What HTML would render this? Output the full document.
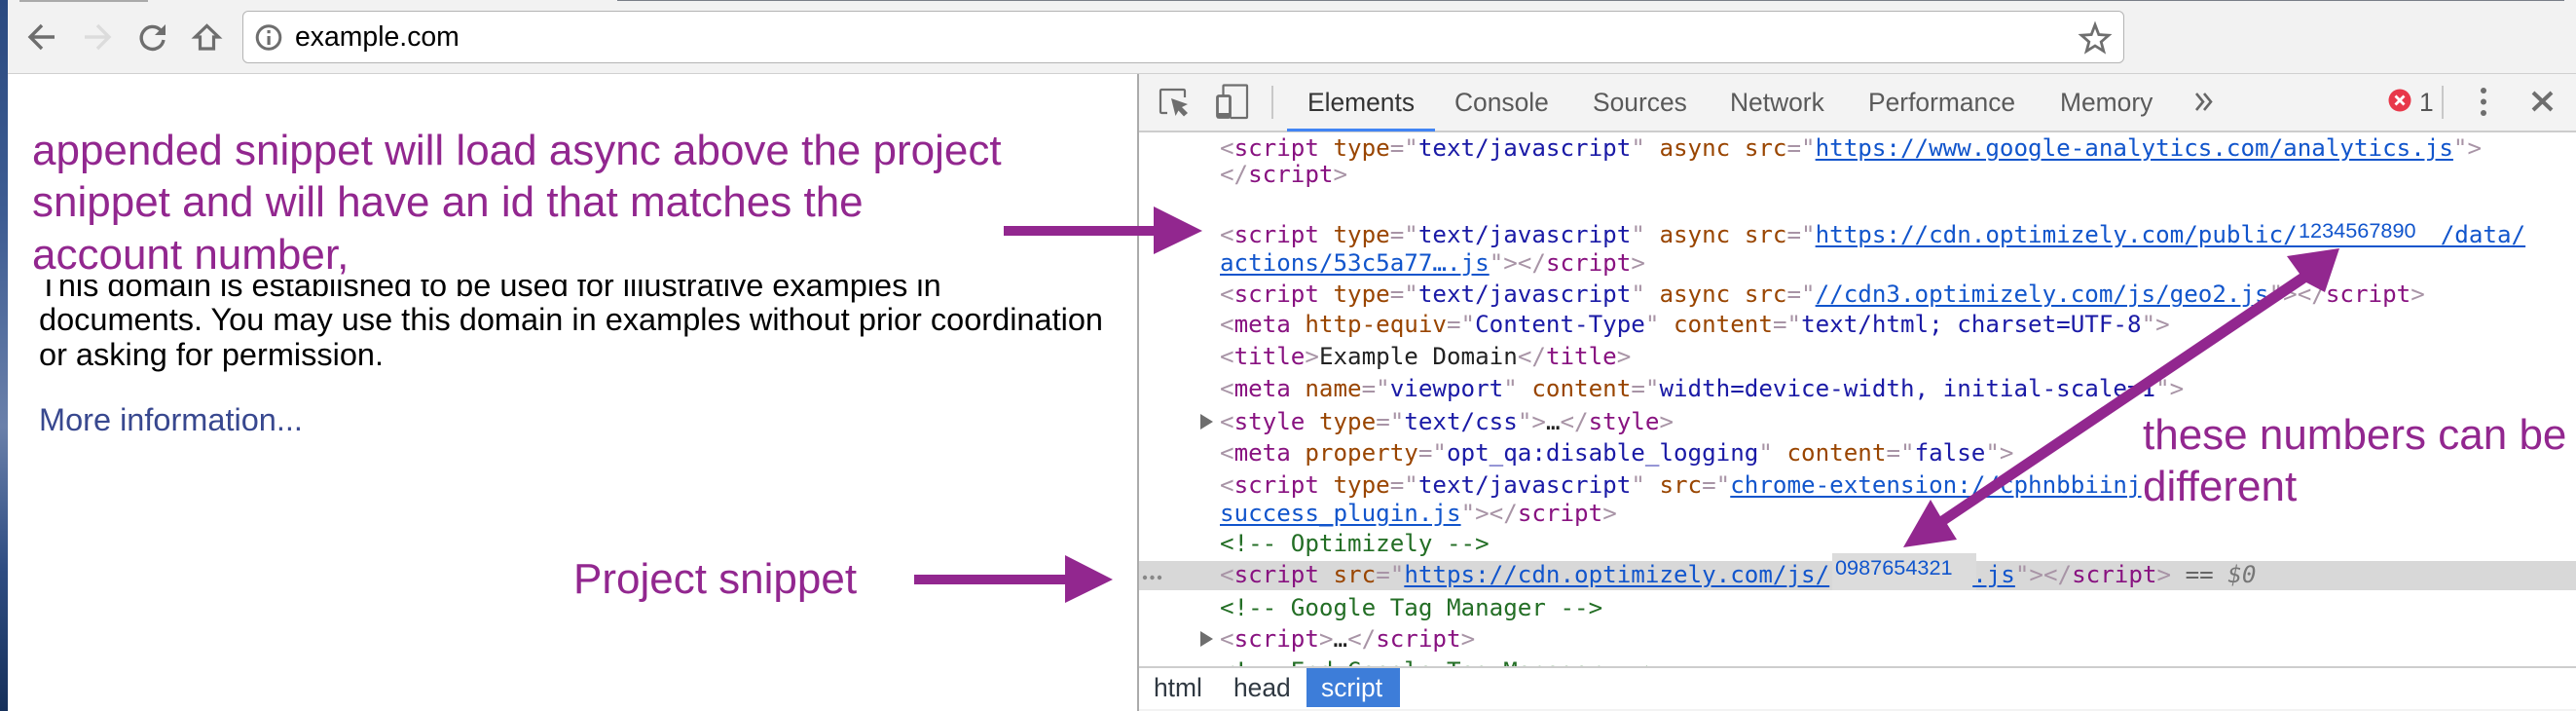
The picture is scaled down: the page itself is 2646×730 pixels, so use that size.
<!DOCTYPE html>
<html><head><meta charset="utf-8"><title>example.com</title>
<style>
html,body{margin:0;padding:0;background:#fff}
#p{position:relative;width:2646px;height:730px;overflow:hidden;background:#fff;font-family:"Liberation Sans",Arial,sans-serif}
.a{position:absolute;white-space:pre}
.tab{position:absolute;top:88px;line-height:34px;font-size:26.4px;color:#5a5a5a;white-space:pre}
.l{position:absolute;left:1253px;height:32px;line-height:32px;font-family:"DejaVu Sans Mono",monospace;font-size:24.2px;color:#222;white-space:pre;letter-spacing:0}
.b{color:#a894a6}.t{color:#881280}.n{color:#994500}.v{color:#1a1aa6}.u{color:#1155cc;text-decoration:underline;text-underline-offset:3px}.c{color:#236e25}
.pu{position:absolute;white-space:pre;color:#92278f;font-size:44px;line-height:52px}
.bk{position:absolute;left:40px;white-space:pre;font-size:32.5px;line-height:36px;color:#000}
.num{font-family:"Liberation Sans",sans-serif;font-size:21.7px;color:#1155cc;position:absolute;white-space:pre;line-height:26px}
</style></head><body><div id="p">
<div class="a" style="left:0;top:0;width:8px;height:730px;background:linear-gradient(#2b4a80 0,#3d5c92 30%,#6a80aa 60%,#2f4d82 80%,#16305a 100%)"></div>
<div class="a" style="left:8px;top:0;width:2638px;height:75px;background:#f2f2f2;border-bottom:1px solid #d0d0d0"></div>
<div class="a" style="left:634px;top:0;width:2000px;height:1px;background:#7a7f88"></div>
<div class="a" style="left:20px;top:0;width:132px;height:2px;background:#aaa"></div>
<div class="a" style="left:249px;top:11px;width:1931px;height:52px;background:#fff;border:1px solid #b4b4b4;border-radius:6px"></div>
<div class="a" style="left:303px;top:20px;font-size:28.4px;line-height:36px;color:#000">example.com</div>

<svg class="a" style="left:0;top:0" width="300" height="70" fill="none">
<path d="M56 38H33M43 26L31 38L43 50" stroke="#6e6e6e" stroke-width="3.4"/>
<path d="M87 38H110M100 26L112 38L100 50" stroke="#dcdcdc" stroke-width="3.4"/>
<path d="M165 31A11.5 11.5 0 1 0 168 41" stroke="#6e6e6e" stroke-width="3.4"/>
<path d="M170 25V36H159Z" fill="#6e6e6e"/>
<path d="M205.500 50V38H200.500L212.500 26.500L224.500 38H219.500V50Z" stroke="#6e6e6e" stroke-width="3.2" stroke-linejoin="miter"/>
<circle cx="276" cy="38.500" r="11.800" stroke="#6e6e6e" stroke-width="3"/>
<rect x="274.500" y="37" width="3.200" height="9" fill="#6e6e6e"/><rect x="274.500" y="31" width="3.200" height="3.200" fill="#6e6e6e"/>
</svg>
<svg class="a" style="left:2130px;top:18px" width="44" height="40" fill="none"><path d="M22 7.500L25.800 17.500L36 18.200L28.200 25L30.800 34.500L22 29L13.200 34.500L15.800 25L8 18.200L18.200 17.500Z" stroke="#6e6e6e" stroke-width="2.800"/></svg>

<div class="bk" style="top:275px;height:30px;overflow:visible">This domain is established to be used for illustrative examples in</div>
<div class="bk" style="top:310px">documents. You may use this domain in examples without prior coordination</div>
<div class="bk" style="top:346px">or asking for permission.</div>
<div class="bk" style="top:413px;color:#38488f">More information...</div>
<div class="a" style="left:8px;top:230px;width:1160px;height:57px;background:#fff"></div>

<div class="a" style="left:1168px;top:76px;width:2px;height:654px;background:#ababab"></div>
<div class="a" style="left:1170px;top:76px;width:1476px;height:58px;background:#f3f3f3;border-bottom:2px solid #cdcdcd"></div>
<div class="a" style="left:1322px;top:132px;width:152px;height:3px;background:#4285f4"></div>
<svg class="a" style="left:1180px;top:80px" width="130" height="50" fill="none">
<path d="M19 36H13.500Q12 36 12 34.500V13.500Q12 12 13.500 12H35.500Q37 12 37 13.500V20" stroke="#6e6e6e" stroke-width="2.200"/>
<path d="M23 21L40 27L34 30L40 36L36 39.500L30.500 33.500L27.500 39Z" fill="#6e6e6e"/>
<path d="M76.500 18V8.500Q76.500 7.500 77.500 7.500H100Q101 7.500 101 8.500V40Q101 41 100 41H84" stroke="#6e6e6e" stroke-width="2.200"/>
<rect x="70.500" y="18.500" width="13" height="22" rx="1.500" stroke="#6e6e6e" stroke-width="2.800"/>
<rect x="70" y="36" width="14" height="5.500" fill="#6e6e6e"/>
<rect x="126" y="8" width="2" height="34" fill="#c8c8c8"/>
</svg>
<div class="tab" style="left:1343px;color:#333">Elements</div>
<div class="tab" style="left:1494px">Console</div>
<div class="tab" style="left:1636px">Sources</div>
<div class="tab" style="left:1777px">Network</div>
<div class="tab" style="left:1919px">Performance</div>
<div class="tab" style="left:2116px">Memory</div>
<svg class="a" style="left:2250px;top:92px" width="30" height="26" fill="none"><path d="M6 4L13 12.500L6 21M14 4L21 12.500L14 21" stroke="#666" stroke-width="2.600"/></svg>
<svg class="a" style="left:2440px;top:80px" width="206" height="50" fill="none">
<circle cx="25" cy="23" r="11.500" fill="#e8384a"/>
<path d="M20.500 18.500L29.500 27.500M29.500 18.500L20.500 27.500" stroke="#fff" stroke-width="2.800"/>
<rect x="68" y="8" width="2" height="34" fill="#c8c8c8"/>
<circle cx="111" cy="13" r="3" fill="#6e6e6e"/><circle cx="111" cy="24.500" r="3" fill="#6e6e6e"/><circle cx="111" cy="36" r="3" fill="#6e6e6e"/>
<path d="M162 15L181 33M181 15L162 33" stroke="#6e6e6e" stroke-width="4"/>
</svg>
<div class="tab" style="left:2485px;color:#555">1</div>

<div class="a" style="left:1170px;top:576px;width:1476px;height:30px;background:#d8d8d8"></div>
<div class="a" style="left:1173px;top:590px;width:24px;height:6px;color:#777"><svg width="24" height="6" style="display:block"><circle cx="3" cy="3" r="2.200" fill="#888"/><circle cx="10.500" cy="3" r="2.200" fill="#888"/><circle cx="18" cy="3" r="2.200" fill="#888"/></svg></div>

<div class="l" style="top:136px"><span class="b">&lt;</span><span class="t">script</span> <span class="n">type</span><span class="b">="</span><span class="v">text/javascript</span><span class="b">"</span> <span class="n">async</span> <span class="n">src</span><span class="b">="</span><span class="u">https://www.google-analytics.com/analytics.js</span><span class="b">"&gt;</span></div>
<div class="l" style="top:163px"><span class="b">&lt;/</span><span class="t">script</span><span class="b">&gt;</span></div>
<div class="l" style="top:225px"><span class="b">&lt;</span><span class="t">script</span> <span class="n">type</span><span class="b">="</span><span class="v">text/javascript</span><span class="b">"</span> <span class="n">async</span> <span class="n">src</span><span class="b">="</span><span class="u">https://cdn.optimizely.com/public/</span><span style="display:inline-block;width:147px"></span><span class="u">/data/</span></div>
<div class="a" style="left:2358px;top:252px;width:152px;height:2px;background:#1155cc"></div>
<div class="num" style="left:2361px;top:224px">1234567890</div>
<div class="l" style="top:254px"><span class="u">actions/53c5a77….js</span><span class="b">"&gt;&lt;/</span><span class="t">script</span><span class="b">&gt;</span></div>
<div class="l" style="top:286px"><span class="b">&lt;</span><span class="t">script</span> <span class="n">type</span><span class="b">="</span><span class="v">text/javascript</span><span class="b">"</span> <span class="n">async</span> <span class="n">src</span><span class="b">="</span><span class="u">//cdn3.optimizely.com/js/geo2.js</span><span class="b">"&gt;&lt;/</span><span class="t">script</span><span class="b">&gt;</span></div>
<div class="l" style="top:317px"><span class="b">&lt;</span><span class="t">meta</span> <span class="n">http-equiv</span><span class="b">="</span><span class="v">Content-Type</span><span class="b">"</span> <span class="n">content</span><span class="b">="</span><span class="v">text/html; charset=UTF-8</span><span class="b">"&gt;</span></div>
<div class="l" style="top:350px"><span class="b">&lt;</span><span class="t">title</span><span class="b">&gt;</span>Example Domain<span class="b">&lt;/</span><span class="t">title</span><span class="b">&gt;</span></div>
<div class="l" style="top:383px"><span class="b">&lt;</span><span class="t">meta</span> <span class="n">name</span><span class="b">="</span><span class="v">viewport</span><span class="b">"</span> <span class="n">content</span><span class="b">="</span><span class="v">width=device-width, initial-scale=1</span><span class="b">"&gt;</span></div>
<svg class="a" style="left:1233px;top:424px" width="14" height="18"><path d="M0 1L13 9L0 17Z" fill="#6e6e6e"/></svg>
<div class="l" style="top:417px"><span class="b">&lt;</span><span class="t">style</span> <span class="n">type</span><span class="b">="</span><span class="v">text/css</span><span class="b">"&gt;</span>…<span class="b">&lt;/</span><span class="t">style</span><span class="b">&gt;</span></div>
<div class="l" style="top:449px"><span class="b">&lt;</span><span class="t">meta</span> <span class="n">property</span><span class="b">="</span><span class="v">opt_qa:disable_logging</span><span class="b">"</span> <span class="n">content</span><span class="b">="</span><span class="v">false</span><span class="b">"&gt;</span></div>
<div class="l" style="top:482px;width:947px;overflow:hidden"><span class="b">&lt;</span><span class="t">script</span> <span class="n">type</span><span class="b">="</span><span class="v">text/javascript</span><span class="b">"</span> <span class="n">src</span><span class="b">="</span><span class="u">chrome-extension://cphnbbiinj</span></div>
<div class="l" style="top:511px"><span class="u">success_plugin.js</span><span class="b">"&gt;&lt;/</span><span class="t">script</span><span class="b">&gt;</span></div>
<div class="l c" style="top:542px">&lt;!-- Optimizely --&gt;</div>
<div class="a" style="left:1882px;top:568px;width:148px;height:38px;background:#dcdcdc"></div>
<div class="l" style="top:574px"><span class="b">&lt;</span><span class="t">script</span> <span class="n">src</span><span class="b">="</span><span class="u">https://cdn.optimizely.com/js/</span><span style="display:inline-block;width:147px"></span><span class="u">.js</span><span class="b">"&gt;&lt;/</span><span class="t">script</span><span class="b">&gt;</span> <span style="color:#666">==</span> <span style="color:#777;font-style:italic">$0</span></div>
<div class="num" style="left:1885px;top:570px">0987654321</div>
<div class="l c" style="top:608px">&lt;!-- Google Tag Manager --&gt;</div>
<svg class="a" style="left:1233px;top:647px" width="14" height="18"><path d="M0 1L13 9L0 17Z" fill="#6e6e6e"/></svg>
<div class="l" style="top:640px"><span class="b">&lt;</span><span class="t">script</span><span class="b">&gt;</span>…<span class="b">&lt;/</span><span class="t">script</span><span class="b">&gt;</span></div>
<div class="l c" style="top:673px">&lt;!-- End Google Tag Manager --&gt;</div>

<div class="a" style="left:1170px;top:684px;width:1476px;height:42px;background:#fff;border-top:2px solid #cdcdcd;border-bottom:2px solid #cdcdcd"></div>
<div class="a" style="left:1170px;top:728px;width:1476px;height:2px;background:#f3f3f3"></div>
<div class="a" style="left:1342px;top:686px;width:96px;height:40px;background:#3d7dd9"></div>
<div class="a" style="left:1185px;top:688px;font-size:26.4px;line-height:36px;color:#303942">html</div>
<div class="a" style="left:1267px;top:688px;font-size:26.4px;line-height:36px;color:#303942">head</div>
<div class="a" style="left:1357px;top:688px;font-size:26.4px;line-height:36px;color:#fff">script</div>

<div class="pu" style="left:33px;top:129px">appended snippet will load async above the project</div>
<div class="pu" style="left:33px;top:182px">snippet and will have an id that matches the</div>
<div class="pu" style="left:33px;top:236px">account number,</div>
<div class="pu" style="left:589px;top:569px">Project snippet</div>
<div class="pu" style="left:2201px;top:421px">these numbers can be</div>
<div class="pu" style="left:2201px;top:474px">different</div>

<svg class="a" style="left:0;top:0" width="2646" height="730">
<path d="M1031 232H1185V212L1235 237L1185 261V242H1031Z" fill="#92278f"/>
<path d="M939 590H1094V570L1143 595L1094 619V600H939Z" fill="#92278f"/>
<path d="M2403 255L2349 263L2362 281L1993 530L1983 513L1955 562L2010 554L2000 538L2369 290L2388 300Z" fill="#92278f"/>
</svg>
</div></body></html>
